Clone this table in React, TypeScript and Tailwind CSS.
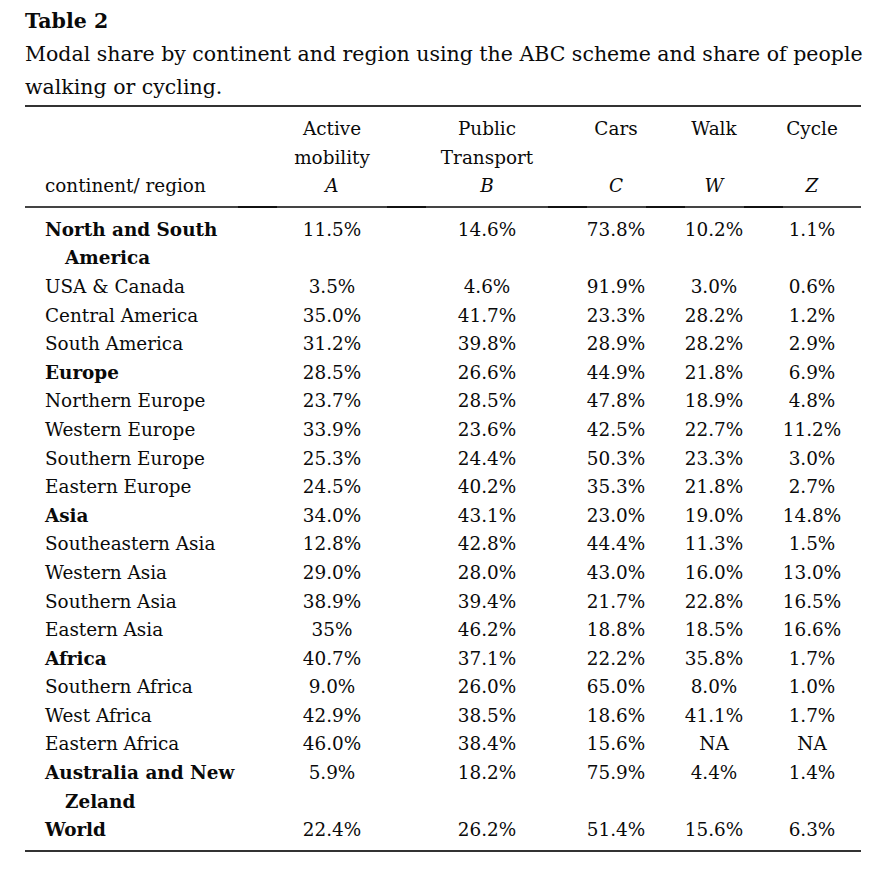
import React from "react";

type Row = {
  label: string;
  wrap?: string;
  bold?: boolean;
  a: string;
  b: string;
  c: string;
  w: string;
  z: string;
};

const rows: Row[] = [
  { label: "North and South", wrap: "America", bold: true, a: "11.5%", b: "14.6%", c: "73.8%", w: "10.2%", z: "1.1%" },
  { label: "USA & Canada", a: "3.5%", b: "4.6%", c: "91.9%", w: "3.0%", z: "0.6%" },
  { label: "Central America", a: "35.0%", b: "41.7%", c: "23.3%", w: "28.2%", z: "1.2%" },
  { label: "South America", a: "31.2%", b: "39.8%", c: "28.9%", w: "28.2%", z: "2.9%" },
  { label: "Europe", bold: true, a: "28.5%", b: "26.6%", c: "44.9%", w: "21.8%", z: "6.9%" },
  { label: "Northern Europe", a: "23.7%", b: "28.5%", c: "47.8%", w: "18.9%", z: "4.8%" },
  { label: "Western Europe", a: "33.9%", b: "23.6%", c: "42.5%", w: "22.7%", z: "11.2%" },
  { label: "Southern Europe", a: "25.3%", b: "24.4%", c: "50.3%", w: "23.3%", z: "3.0%" },
  { label: "Eastern Europe", a: "24.5%", b: "40.2%", c: "35.3%", w: "21.8%", z: "2.7%" },
  { label: "Asia", bold: true, a: "34.0%", b: "43.1%", c: "23.0%", w: "19.0%", z: "14.8%" },
  { label: "Southeastern Asia", a: "12.8%", b: "42.8%", c: "44.4%", w: "11.3%", z: "1.5%" },
  { label: "Western Asia", a: "29.0%", b: "28.0%", c: "43.0%", w: "16.0%", z: "13.0%" },
  { label: "Southern Asia", a: "38.9%", b: "39.4%", c: "21.7%", w: "22.8%", z: "16.5%" },
  { label: "Eastern Asia", a: "35%", b: "46.2%", c: "18.8%", w: "18.5%", z: "16.6%" },
  { label: "Africa", bold: true, a: "40.7%", b: "37.1%", c: "22.2%", w: "35.8%", z: "1.7%" },
  { label: "Southern Africa", a: "9.0%", b: "26.0%", c: "65.0%", w: "8.0%", z: "1.0%" },
  { label: "West Africa", a: "42.9%", b: "38.5%", c: "18.6%", w: "41.1%", z: "1.7%" },
  { label: "Eastern Africa", a: "46.0%", b: "38.4%", c: "15.6%", w: "NA", z: "NA" },
  { label: "Australia and New", wrap: "Zeland", bold: true, a: "5.9%", b: "18.2%", c: "75.9%", w: "4.4%", z: "1.4%" },
  { label: "World", bold: true, a: "22.4%", b: "26.2%", c: "51.4%", w: "15.6%", z: "6.3%" },
];

const grid = "grid grid-cols-[232px_150px_160px_98px_98px_98px]";

const App = () => {
  return (
    <div className="w-[893px] h-[881px] bg-white text-[#0a0a0a] font-['DejaVu_Serif',serif] text-[18.4px] leading-[28.6px]">
      <div className="pl-[25px] pt-[5px] w-[861px]">
        {/* Caption */}
        <div className="leading-[33px]">
          <div className="font-bold text-[20.5px]">Table 2</div>
          <div className="whitespace-nowrap text-[20.5px]">
            Modal share by continent and region using the ABC scheme and share of people
            <br />
            walking or cycling.
          </div>
        </div>

        {/* Header */}
        <div className="mt-[1px] h-[2px] bg-[#333]" />
        <div className={`${grid} pt-[8px] pb-[5px] text-center`}>
          <div className="flex flex-col justify-end text-left pl-[20px]">continent/ region</div>
          <div>
            Active
            <br />
            mobility
            <br />
            <i>A</i>
          </div>
          <div>
            Public
            <br />
            Transport
            <br />
            <i>B</i>
          </div>
          <div>
            Cars
            <br />
            <br />
            <i>C</i>
          </div>
          <div>
            Walk
            <br />
            <br />
            <i>W</i>
          </div>
          <div>
            Cycle
            <br />
            <br />
            <i>Z</i>
          </div>
        </div>
        <div className="flex h-[2px]">
          <div className="w-[213px] bg-[#444]" />
          <div className="w-[39px] bg-[#111]" />
          <div className="w-[110px] bg-[#444]" />
          <div className="w-[39px] bg-[#111]" />
          <div className="w-[122px] bg-[#444]" />
          <div className="w-[39px] bg-[#111]" />
          <div className="w-[59px] bg-[#444]" />
          <div className="w-[39px] bg-[#111]" />
          <div className="w-[59px] bg-[#444]" />
          <div className="w-[39px] bg-[#111]" />
          <div className="w-[78px] bg-[#444]" />
        </div>

        {/* Body */}
        <div className="pt-[8px] pb-[5px]">
          {rows.map((r) => (
            <div key={r.label} className={`${grid} text-center`}>
              <div className={`text-left pl-[20px] whitespace-nowrap ${r.bold ? "font-bold" : ""}`}>
                {r.label}
                {r.wrap && <div className="pl-[20px]">{r.wrap}</div>}
              </div>
              <div>{r.a}</div>
              <div>{r.b}</div>
              <div>{r.c}</div>
              <div>{r.w}</div>
              <div>{r.z}</div>
            </div>
          ))}
        </div>
        <div className="h-[2px] bg-[#333]" />
      </div>
    </div>
  );
};

export default App;
